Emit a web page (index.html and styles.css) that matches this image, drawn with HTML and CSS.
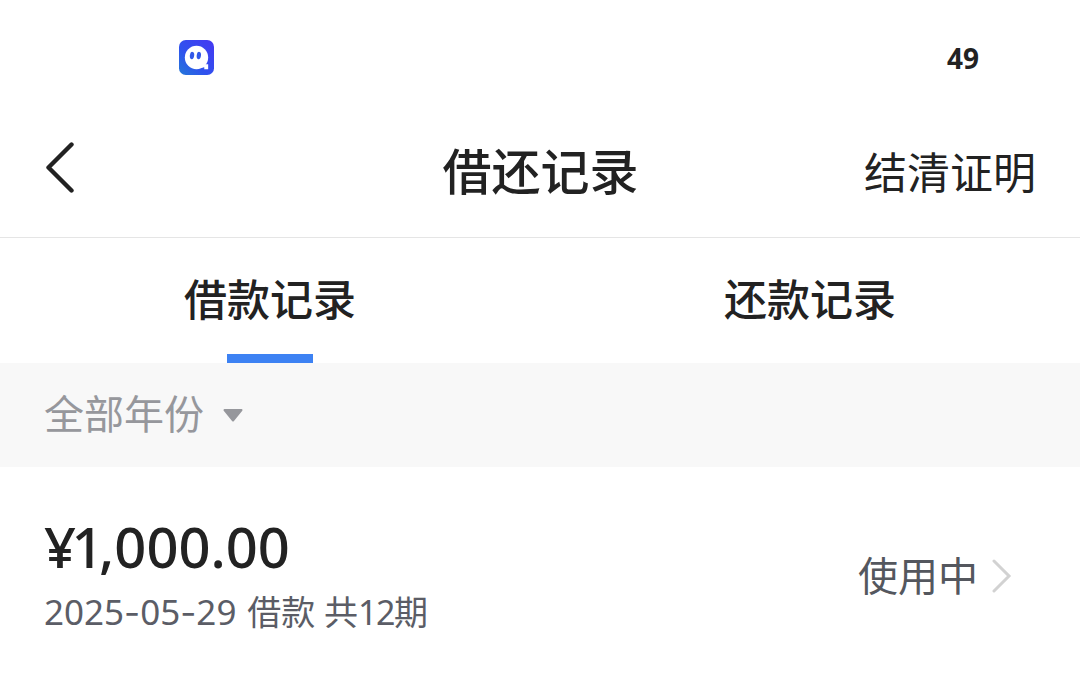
FILE: index.html
```html
<!DOCTYPE html>
<html lang="zh-CN">
<head>
  <meta charset="UTF-8" />
  <meta name="viewport" content="width=device-width, initial-scale=1.0"/>
  <title>借还记录</title>
  <link rel="stylesheet" href="styles.css">
</head>
<body>
  <div class="status-bar">
    <svg class="app-icon" viewBox="0 0 36 36">
      <defs>
        <linearGradient id="iconBg" x1="0" y1="1" x2="1" y2="0">
          <stop offset="0" stop-color="#2478d8"/>
          <stop offset="0.4" stop-color="#2f52ee"/>
          <stop offset="1" stop-color="#4638f2"/>
        </linearGradient>
      </defs>
      <rect width="36" height="36" rx="7" fill="url(#iconBg)"/>
      <circle cx="18" cy="18" r="12" fill="#fff"/>
      <path d="M20 29 L26 25 H30 V30 H26 V28 Z" fill="#fff"/>
      <ellipse cx="13.4" cy="16" rx="2.2" ry="3.8" transform="rotate(8 13.4 16)" fill="#3157e8"/>
      <ellipse cx="20.4" cy="16" rx="2.2" ry="3.8" transform="rotate(8 20.4 16)" fill="#3157e8"/>
    </svg>
    <span class="battery">49</span>
  </div>

  <header class="nav-bar">
    <a class="back" href="#">
      <svg width="30" height="52" viewBox="0 0 30 52">
        <path d="M26.5 3.5 L3.5 26.5 L26.5 49.5" fill="none" stroke="#222" stroke-width="4.4" stroke-linecap="round" stroke-linejoin="round"/>
      </svg>
    </a>
    <h1>借还记录</h1>
    <a class="certificate" href="#">结清证明</a>
  </header>

  <nav class="tabs">
    <a class="tab active" href="#"><span>借款记录</span></a>
    <a class="tab" href="#"><span>还款记录</span></a>
  </nav>

  <div class="filter">
    <span>全部年份</span>
    <svg width="20" height="13" viewBox="0 0 20 13"><path d="M1.5 1H18.5L10 11.5Z" fill="#96979c" stroke="#96979c" stroke-width="2" stroke-linejoin="round"/></svg>
  </div>

  <div class="record">
    <div class="record-info">
      <p class="amount"><span class="currency">¥1</span>,000.00</p>
      <p class="detail"><span class="date">2025<span class="dash">-</span>05<span class="dash">-</span>29</span> 借款 共<span class="periods">12</span>期</p>
    </div>
    <div class="record-status">
      <span>使用中</span>
      <svg width="20" height="34" viewBox="0 0 20 34">
        <path d="M2 2 L17 17 L2 32" fill="none" stroke="#d2d2d2" stroke-width="3" stroke-linecap="round"/>
      </svg>
    </div>
  </div>
</body>
</html>
```

FILE: styles.css
```css
* {
  box-sizing: border-box;
}
body {
  margin: 0;
  font-family: "Noto Sans", "Noto Sans CJK SC", sans-serif;
  background-color: #fff;
  color: #222;
}
a {
  color: inherit;
  text-decoration: none;
}
svg {
  display: block;
}
.status-bar {
  display: flex;
  justify-content: space-between;
  align-items: center;
  height: 115px;
  padding: 0 101px 0 179px;
}
.app-icon {
  width: 35px;
  height: 35px;
}
.battery {
  font-size: 28px;
  font-weight: 700;
}
.nav-bar {
  display: grid;
  grid-template-columns: 1fr auto 1fr;
  align-items: center;
  height: 123px;
  padding: 0 44px 15px 45px;
  border-bottom: 1px solid #e5e5e5;
}
.back {
  padding-bottom: 3px;
}
.nav-bar h1 {
  margin: 0;
  font-family: "Noto Sans CJK SC", sans-serif;
  font-size: 49px;
  font-weight: 500;
  line-height: 60px;
}
.certificate {
  justify-self: end;
  padding-top: 3px;
  font-family: "Noto Sans CJK SC", sans-serif;
  font-size: 43px;
  line-height: 60px;
}
.tabs {
  display: flex;
  height: 125px;
  font-family: "Noto Sans CJK SC", sans-serif;
}
.tab {
  display: flex;
  flex: 1;
  flex-direction: column;
  align-items: center;
  justify-content: space-between;
  padding-top: 29px;
  font-size: 43px;
  font-weight: 500;
  line-height: 60px;
}
.tab.active::after {
  content: "";
  width: 86px;
  height: 9px;
  background-color: #3d82f3;
}
.filter {
  display: flex;
  align-items: center;
  gap: 19px;
  height: 104px;
  padding: 0 44px;
  background-color: #f8f8f8;
  color: #96979c;
  font-family: "Noto Sans CJK SC", sans-serif;
  font-size: 40px;
  line-height: 60px;
}
.filter span {
  padding-bottom: 6px;
}
.record {
  display: flex;
  justify-content: space-between;
  height: 214px;
  padding: 43px 68px 0 44px;
}
.record p {
  margin: 0;
}
.amount {
  font-size: 56px;
  font-weight: 500;
  line-height: 72px;
}
.currency {
  letter-spacing: -4.5px;
}
.detail {
  color: #5b5d66;
  font-size: 34px;
  line-height: 60px;
}
.date {
  margin-right: 2px;
  font-size: 35px;
}
.dash {
  font-family: Inter, sans-serif;
}
.periods {
  letter-spacing: -1.5px;
}
.record-status {
  display: flex;
  align-items: center;
  gap: 14px;
  height: 132px;
  color: #54575e;
  font-family: "Noto Sans CJK SC", sans-serif;
  font-size: 40px;
  line-height: 60px;
}
.record-status span {
  padding-bottom: 5px;
}
```
